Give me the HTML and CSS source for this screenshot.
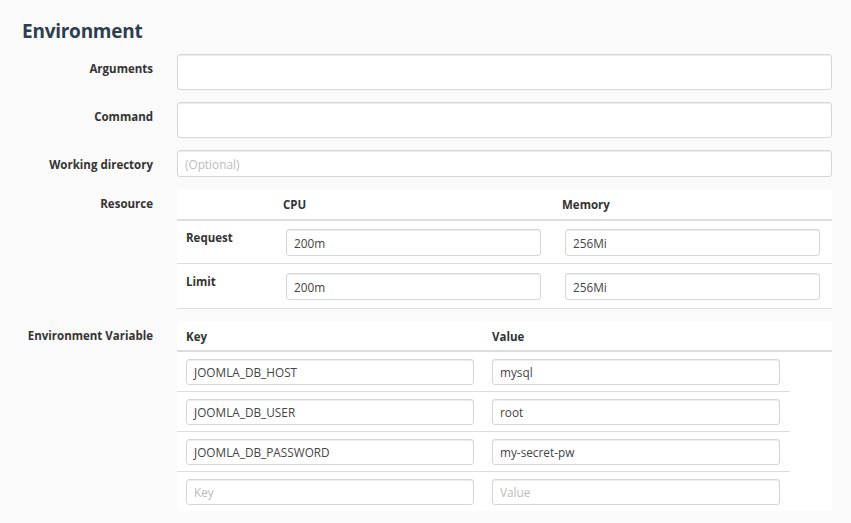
FILE: index.html
```html
<!DOCTYPE html>
<html>
<head>
<meta charset="utf-8">
<link rel="stylesheet" href="styles.css">
</head>
<body>
<div class="page">
  <h2 class="title">Environment</h2>
  <div class="form">
    <div class="row">
      <label class="lbl lbl-tall">Arguments</label>
      <div class="ctl"><div class="inp inp-tall"></div></div>
    </div>
    <div class="row">
      <label class="lbl lbl-tall">Command</label>
      <div class="ctl"><div class="inp inp-tall"></div></div>
    </div>
    <div class="row">
      <label class="lbl lbl-short">Working directory</label>
      <div class="ctl"><div class="inp inp-short ph">(Optional)</div></div>
    </div>
    <div class="row">
      <label class="lbl lbl-table">Resource</label>
      <div class="ctl">
        <div class="res">
          <div class="res-head">
            <div></div>
            <div class="th th-cpu">CPU</div>
            <div class="th th-mem">Memory</div>
          </div>
          <div class="res-row">
            <div class="rl">Request</div>
            <div class="rc"><div class="inp inp-res">200m</div></div>
            <div class="rc"><div class="inp inp-res">256Mi</div></div>
          </div>
          <div class="res-row">
            <div class="rl">Limit</div>
            <div class="rc"><div class="inp inp-res">200m</div></div>
            <div class="rc"><div class="inp inp-res">256Mi</div></div>
          </div>
        </div>
      </div>
    </div>
    <div class="row">
      <label class="lbl lbl-env">Environment Variable</label>
      <div class="ctl">
        <div class="env">
          <div class="env-head">
            <div class="th th-key">Key</div>
            <div class="th th-val">Value</div>
          </div>
          <div class="env-body">
            <div class="env-row">
              <div class="ec"><div class="inp inp-env">JOOMLA_DB_HOST</div></div>
              <div class="ec"><div class="inp inp-env">mysql</div></div>
            </div>
            <div class="env-row">
              <div class="ec"><div class="inp inp-env">JOOMLA_DB_USER</div></div>
              <div class="ec"><div class="inp inp-env">root</div></div>
            </div>
            <div class="env-row">
              <div class="ec"><div class="inp inp-env">JOOMLA_DB_PASSWORD</div></div>
              <div class="ec"><div class="inp inp-env">my-secret-pw</div></div>
            </div>
            <div class="env-row last">
              <div class="ec"><div class="inp inp-env ph">Key</div></div>
              <div class="ec"><div class="inp inp-env ph">Value</div></div>
            </div>
          </div>
        </div>
      </div>
    </div>
  </div>
</div>
</body>
</html>
```
FILE: styles.css
```css
* { box-sizing: border-box; }
html, body { margin: 0; padding: 0; }
body {
  background: #fafafa;
  font-family: "Open Sans", "Noto Sans", sans-serif;
  font-size: 12px;
  color: #333;
  width: 851px;
  height: 523px;
  overflow: hidden;
}
.page {
  padding: 18px 19px 0 22px;
}
.title {
  margin: 0;
  font-size: 19px;
  line-height: 26px;
  font-weight: 700;
  letter-spacing: -0.25px;
  color: #2c3e50;
}
.form {
  margin-top: 10px;
  display: flex;
  flex-direction: column;
  gap: 12px;
}
.row {
  display: grid;
  grid-template-columns: 131px 655px;
  column-gap: 24px;
}
.lbl {
  text-align: right;
  font-weight: 700;
  font-size: 11.5px;
  color: #333;
  line-height: 16px;
}
.lbl-tall { padding-top: 7px; }
.lbl-short { padding-top: 7px; }
.lbl-table { padding-top: 7px; }
.lbl-env { padding-top: 7px; }
.inp {
  background: #fff;
  border: 1px solid #d6d6d6;
  border-radius: 3px;
  box-shadow: inset 0 1px 1px rgba(0,0,0,0.075);
  font-size: 11.8px;
  color: #444;
  padding: 0 7px;
  display: flex;
  align-items: center;
  white-space: nowrap;
}
.ph { color: #bbb; }
.inp-tall { height: 36px; }
.inp-short { height: 27px; }
.inp-res { height: 27px; width: 255px; }
.inp-env { height: 26px; width: 288px; }

.res { background: #fff; }
.res-head, .res-row {
  display: grid;
  grid-template-columns: 101px 279px 275px;
}
.res-head {
  height: 32px;
  border-bottom: 2px solid #ddd;
  align-items: center;
}
.th { font-weight: 700; font-size: 11.5px; color: #333; }
.th-cpu { padding-left: 5px; }
.th-mem { padding-left: 5px; }
.res-row {
  border-bottom: 1px solid #ddd;
  padding: 8px 0 7px;
}
.res-row + .res-row { padding-top: 9px; padding-bottom: 8px; }
.rl { padding-left: 9px; padding-top: 1px; font-weight: 700; font-size: 11.5px; line-height: 16px; color: #333; }
.rc { padding-left: 8px; }

.env { background: #fff; padding-bottom: 6px; }
.env-head {
  display: grid;
  grid-template-columns: 306px 349px;
  height: 31px;
  border-bottom: 2px solid #ddd;
  align-items: center;
}
.th-key { padding-left: 9px; padding-top: 2px; }
.th-val { padding-left: 9px; padding-top: 2px; }
.env-body { width: 613px; }
.env-row {
  display: grid;
  grid-template-columns: 306px 307px;
  padding: 7px 0 6px;
  border-bottom: 1px solid #ddd;
}
.env-row.last { border-bottom: none; padding-bottom: 0; }
.ec { padding-left: 9px; }
```
